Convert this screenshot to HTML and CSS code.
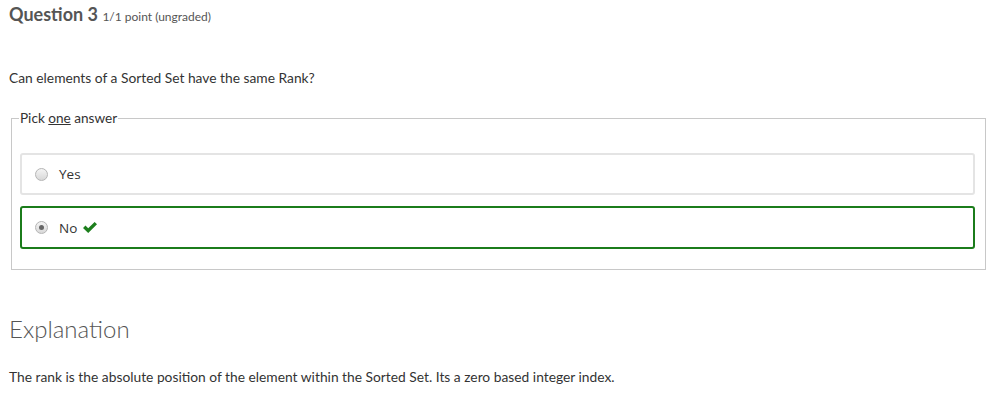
FILE: index.html
```html
<!DOCTYPE html>
<html>
<head>
<meta charset="utf-8">
<link rel="stylesheet" href="styles.css">
</head>
<body>
<div class="page">
  <h2 class="qtitle">Question 3 <span class="points">1/1 point (ungraded)</span></h2>
  <p class="prompt">Can elements of a Sorted Set have the same Rank?</p>
  <fieldset class="choices">
    <legend class="legend">Pick <u>one</u> answer</legend>
    <label class="option">
      <span class="radio"></span>
      <span class="otext">Yes</span>
    </label>
    <label class="option correct">
      <span class="radio checked"></span>
      <span class="otext">No</span>
      <svg class="check" viewBox="0 0 16 13" width="16" height="13"><path d="M1 7 L3.5 4.6 L6.2 7.3 L12.6 0.9 L15 3.3 L6.2 12 Z" fill="#1d7f1d"/></svg>
    </label>
  </fieldset>
  <h3 class="exp-title">Explanation</h3>
  <p class="exp-text">The rank is the absolute position of the element within the Sorted Set. Its a zero based integer index.</p>
</div>
</body>
</html>
```
FILE: styles.css
```css
html, body { margin: 0; padding: 0; background: #fff; }
body { font-family: Lato, "Open Sans", sans-serif; color: #333; }
.page { padding: 0 13px 0 9px; }
.qtitle {
  margin: 0; padding-top: 2px;
  font-size: 18px; font-weight: 700; color: #555; line-height: 24px;
}
.points { font-size: 12px; font-weight: 400; color: #555; }
.prompt { margin: 40px 0 0; font-size: 13.8px; line-height: 18px; }
.choices {
  margin: 23px 0 0 2px;
  border: 1px solid #c8c8c8;
  padding: 27px 10px 20px 8px;
  display: flex; flex-direction: column; gap: 11px;
}
.legend { font-size: 13.6px; padding: 0 1px; margin-left: -1px; color: #333; }
.option {
  display: flex; align-items: center;
  height: 38px; border: 2px solid #e4e4e4; border-radius: 3px;
  padding-left: 13px;
  font-family: "Open Sans", sans-serif; font-size: 13.5px; color: #333;
}
.option.correct { border-color: #1b7c1b; height: 39px; }
.radio {
  width: 11px; height: 11px; border-radius: 50%;
  border: 1px solid #b5b5b5;
  background: linear-gradient(#f4f4f4, #d8d8d8);
  display: flex; align-items: center; justify-content: center;
}
.radio.checked::after {
  content: ""; width: 5px; height: 5px; border-radius: 50%; background: #666;
}
.otext { margin-left: 11px; }
.check { margin-left: 5px; }
.exp-title {
  margin: 45px 0 0; font-size: 24px; font-weight: 300; color: #555; line-height: 28px;
}
.exp-text { margin: 25px 0 0; font-size: 13.8px; line-height: 18px; }
```
